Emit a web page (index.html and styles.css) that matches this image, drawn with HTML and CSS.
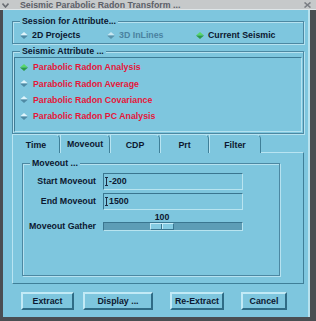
FILE: index.html
```html
<!DOCTYPE html>
<html>
<head>
<meta charset="utf-8">
<link rel="stylesheet" href="styles.css">
</head>
<body>
<div class="window">
  <div class="titlebar">
    <svg class="tb-icon" width="7" height="5" viewBox="0 0 7 5"><polyline points="0.5,0.5 3.5,4 6.5,0.5" fill="none" stroke="#6a6e74" stroke-width="1.6"/></svg>
    <span class="tb-title">Seismic Parabolic Radon Transform ...</span>
    <svg class="tb-close" width="7" height="6" viewBox="0 0 7 6"><path d="M0.5 0.5 L6.5 5.5 M6.5 0.5 L0.5 5.5" stroke="#7a7e84" stroke-width="1.6"/></svg>
  </div>
  <div class="frame">
    <div class="group session">
      <div class="legend">Session for Attribute...</div>
      <div class="radio-row">
        <div class="radio"><svg class="dia" width="8" height="7" viewBox="0 0 8 7"><polygon points="0,3.5 4,0 8,3.5" fill="#dff4fb"/><polygon points="0,3.5 8,3.5 4,7" fill="#4f8aa4"/></svg><span>2D Projects</span></div>
        <div class="radio disabled"><svg class="dia" width="8" height="7" viewBox="0 0 8 7"><polygon points="0,3.5 4,0 8,3.5" fill="#c8e8f2"/><polygon points="0,3.5 8,3.5 4,7" fill="#5b94ac"/></svg><span>3D InLines</span></div>
        <div class="radio"><svg class="dia" width="8" height="7" viewBox="0 0 8 7"><polygon points="0,3.5 4,0 8,3.5" fill="#58d868"/><polygon points="0,3.5 8,3.5 4,7" fill="#2a9c48"/></svg><span>Current Seismic</span></div>
      </div>
    </div>
    <div class="group attr">
      <div class="legend">Seismic Attribute ...</div>
      <div class="list">
        <div class="item"><svg class="dia" width="8" height="7" viewBox="0 0 8 7"><polygon points="0,3.5 4,0 8,3.5" fill="#58d868"/><polygon points="0,3.5 8,3.5 4,7" fill="#2a9c48"/></svg><span>Parabolic Radon Analysis</span></div>
        <div class="item"><svg class="dia" width="8" height="7" viewBox="0 0 8 7"><polygon points="0,3.5 4,0 8,3.5" fill="#dff4fb"/><polygon points="0,3.5 8,3.5 4,7" fill="#4f8aa4"/></svg><span>Parabolic Radon Average</span></div>
        <div class="item"><svg class="dia" width="8" height="7" viewBox="0 0 8 7"><polygon points="0,3.5 4,0 8,3.5" fill="#dff4fb"/><polygon points="0,3.5 8,3.5 4,7" fill="#4f8aa4"/></svg><span>Parabolic Radon Covariance</span></div>
        <div class="item"><svg class="dia" width="8" height="7" viewBox="0 0 8 7"><polygon points="0,3.5 4,0 8,3.5" fill="#dff4fb"/><polygon points="0,3.5 8,3.5 4,7" fill="#4f8aa4"/></svg><span>Parabolic Radon PC Analysis</span></div>
      </div>
    </div>
    <div class="tabs">
      <div class="tab t1">Time</div>
      <div class="tab t2 active">Moveout</div>
      <div class="tab t3">CDP</div>
      <div class="tab t4">Prt</div>
      <div class="tab t5">Filter</div>
    </div>
    <div class="panel">
      <div class="group moveout">
        <div class="legend">Moveout ...</div>
        <div class="form">
          <div class="flabel">Start Moveout</div>
          <div class="input"><svg class="caret" width="3" height="9" viewBox="0 0 3 9"><path d="M0 0.5 H3 M1.5 0.5 V8.5 M0 8.5 H3" stroke="#1c2c44" stroke-width="1"/></svg><span>-200</span></div>
          <div class="flabel">End Moveout</div>
          <div class="input"><svg class="caret" width="3" height="9" viewBox="0 0 3 9"><path d="M0 0.5 H3 M1.5 0.5 V8.5 M0 8.5 H3" stroke="#1c2c44" stroke-width="1"/></svg><span>1500</span></div>
          <div class="flabel gather">Moveout Gather</div>
          <div class="slider" style="--pos: 46px">
            <div class="svalue">100</div>
            <div class="trough"><div class="thumb"></div></div>
          </div>
        </div>
      </div>
    </div>
    <div class="buttons">
      <div class="btn b-extract">Extract</div>
      <div class="btn b-display">Display ...</div>
      <div class="btn b-reextract">Re-Extract</div>
      <div class="btn b-cancel">Cancel</div>
    </div>
  </div>
</div>
</body>
</html>
```

FILE: styles.css
```css
* { box-sizing: border-box; margin: 0; padding: 0; }
html, body { width: 316px; height: 321px; overflow: hidden; }
body {
  font-family: "Liberation Sans", Arial, sans-serif;
  font-size: 8.8px;
  font-weight: bold;
  color: #0c1830;
  background: #7ec6de;
}
.window { width: 316px; height: 321px; display: flex; flex-direction: column; }

.titlebar {
  height: 10px;
  background: #c6c9ca;
  color: #5c6068;
  display: flex;
  align-items: center;
  padding: 1px 5px 0 2px;
  line-height: 9px;
  border-bottom: 1px solid #dfe6e8;
}
.tb-icon { flex: none; }
.tb-title { margin-left: 11px; flex: 1; white-space: nowrap; }
.tb-close { flex: none; }

.frame {
  flex: 1;
  border-left: 3px solid #4a4e52;
  border-right: 6px solid #4a4e52;
  border-bottom: 4px solid #4a4e52;
  padding: 11px 6px 0 9px;
  box-shadow: inset -2px 0 0 #b8e2ee;
}

.group {
  border: 1px solid #4c88a2;
  box-shadow: inset 1px 1px 0 #b6e2f0, 1px 1px 0 #b6e2f0;
}
.legend {
  display: table;
  margin: -6px 0 0 7px;
  padding: 0 2px;
  line-height: 11px;
  background: #7ec6de;
}

.session { padding-bottom: 2px; }
.radio-row {
  margin-top: 3px;
  display: grid;
  grid-template-columns: 87px 89px auto;
  padding-left: 7px;
  line-height: 11px;
}
.radio { display: flex; align-items: center; gap: 4px; white-space: nowrap; }
.radio.disabled { color: #4a82a0; }
.dia { flex: none; display: block; }

.attr { margin-top: 7px; }
.list {
  margin: 0 1px 1px 1px;
  height: 75px;
  border: 1px solid;
  border-color: #3e7c96 #b4e2f0 #b4e2f0 #3e7c96;
  padding: 1px 0 0 5px;
}
.item {
  height: 16.4px;
  display: flex;
  align-items: center;
  gap: 5px;
  color: #e4163a;
  white-space: nowrap;
}

.tabs {
  display: grid;
  grid-template-columns: 48px 50px 50px 49px 52px;
  height: 18px;
  position: relative;
  z-index: 1;
}
.tab {
  display: flex;
  align-items: center;
  justify-content: center;
  border-top: 1px solid #b8e4f2;
  border-left: 1px solid #b8e4f2;
  border-right: 1px solid #3f7f98;
  border-top-right-radius: 5px;
  background: #7ec6de;
  padding-top: 1px;
}
.tab.active { height: 19px; padding-bottom: 1px; }

.panel {
  height: 132px;
  border: 1px solid;
  border-color: #b8e4f2 #3f7f98 #3f7f98 #b8e4f2;
  padding: 10px 23px 0 9px;
}
.moveout { height: 113px; }

.form {
  margin-top: 4px;
  display: grid;
  grid-template-columns: 73px 140px;
  grid-template-rows: 17px 17px 19px;
  column-gap: 7px;
  row-gap: 3px;
}
.flabel {
  text-align: right;
  align-self: center;
  white-space: nowrap;
  line-height: 11px;
}
.flabel.gather { align-self: end; line-height: 9px; margin-bottom: 1px; }
.input {
  border: 1px solid;
  border-color: #3a7690 #b8e4f0 #b8e4f0 #3a7690;
  display: flex;
  align-items: center;
  padding-left: 1px;
  gap: 1px;
  line-height: 11px;
}
.caret { display: block; flex: none; }

.slider { margin-top: -1px; }
.svalue {
  width: 24px;
  margin-left: calc(var(--pos) + 1px);
  text-align: center;
  line-height: 10px;
  height: 10px;
}
.trough {
  height: 9px;
  background: #5d9db6;
  border: 1px solid;
  border-color: #3a7690 #b8e4f0 #b8e4f0 #3a7690;
}
.thumb {
  width: 24px;
  height: 7px;
  margin-left: var(--pos);
  border: 1px solid;
  border-color: #c4ecf8 #3a7690 #3a7690 #c4ecf8;
  background: linear-gradient(to right, transparent 10px, #3a7690 10px, #3a7690 11px, #c4ecf8 11px, #c4ecf8 12px, transparent 12px), #84cbe2;
}

.buttons {
  margin-top: 8px;
  display: flex;
  padding-left: 9px;
}
.btn {
  height: 18px;
  border: 2px solid;
  border-color: #c2eaf6 #2f6c86 #2f6c86 #c2eaf6;
  display: flex;
  align-items: center;
  justify-content: center;
  white-space: nowrap;
}
.b-extract { width: 53px; }
.b-display { width: 70px; margin-left: 9px; }
.b-reextract { width: 54px; margin-left: 17px; }
.b-cancel { width: 46px; margin-left: 17px; }
```
